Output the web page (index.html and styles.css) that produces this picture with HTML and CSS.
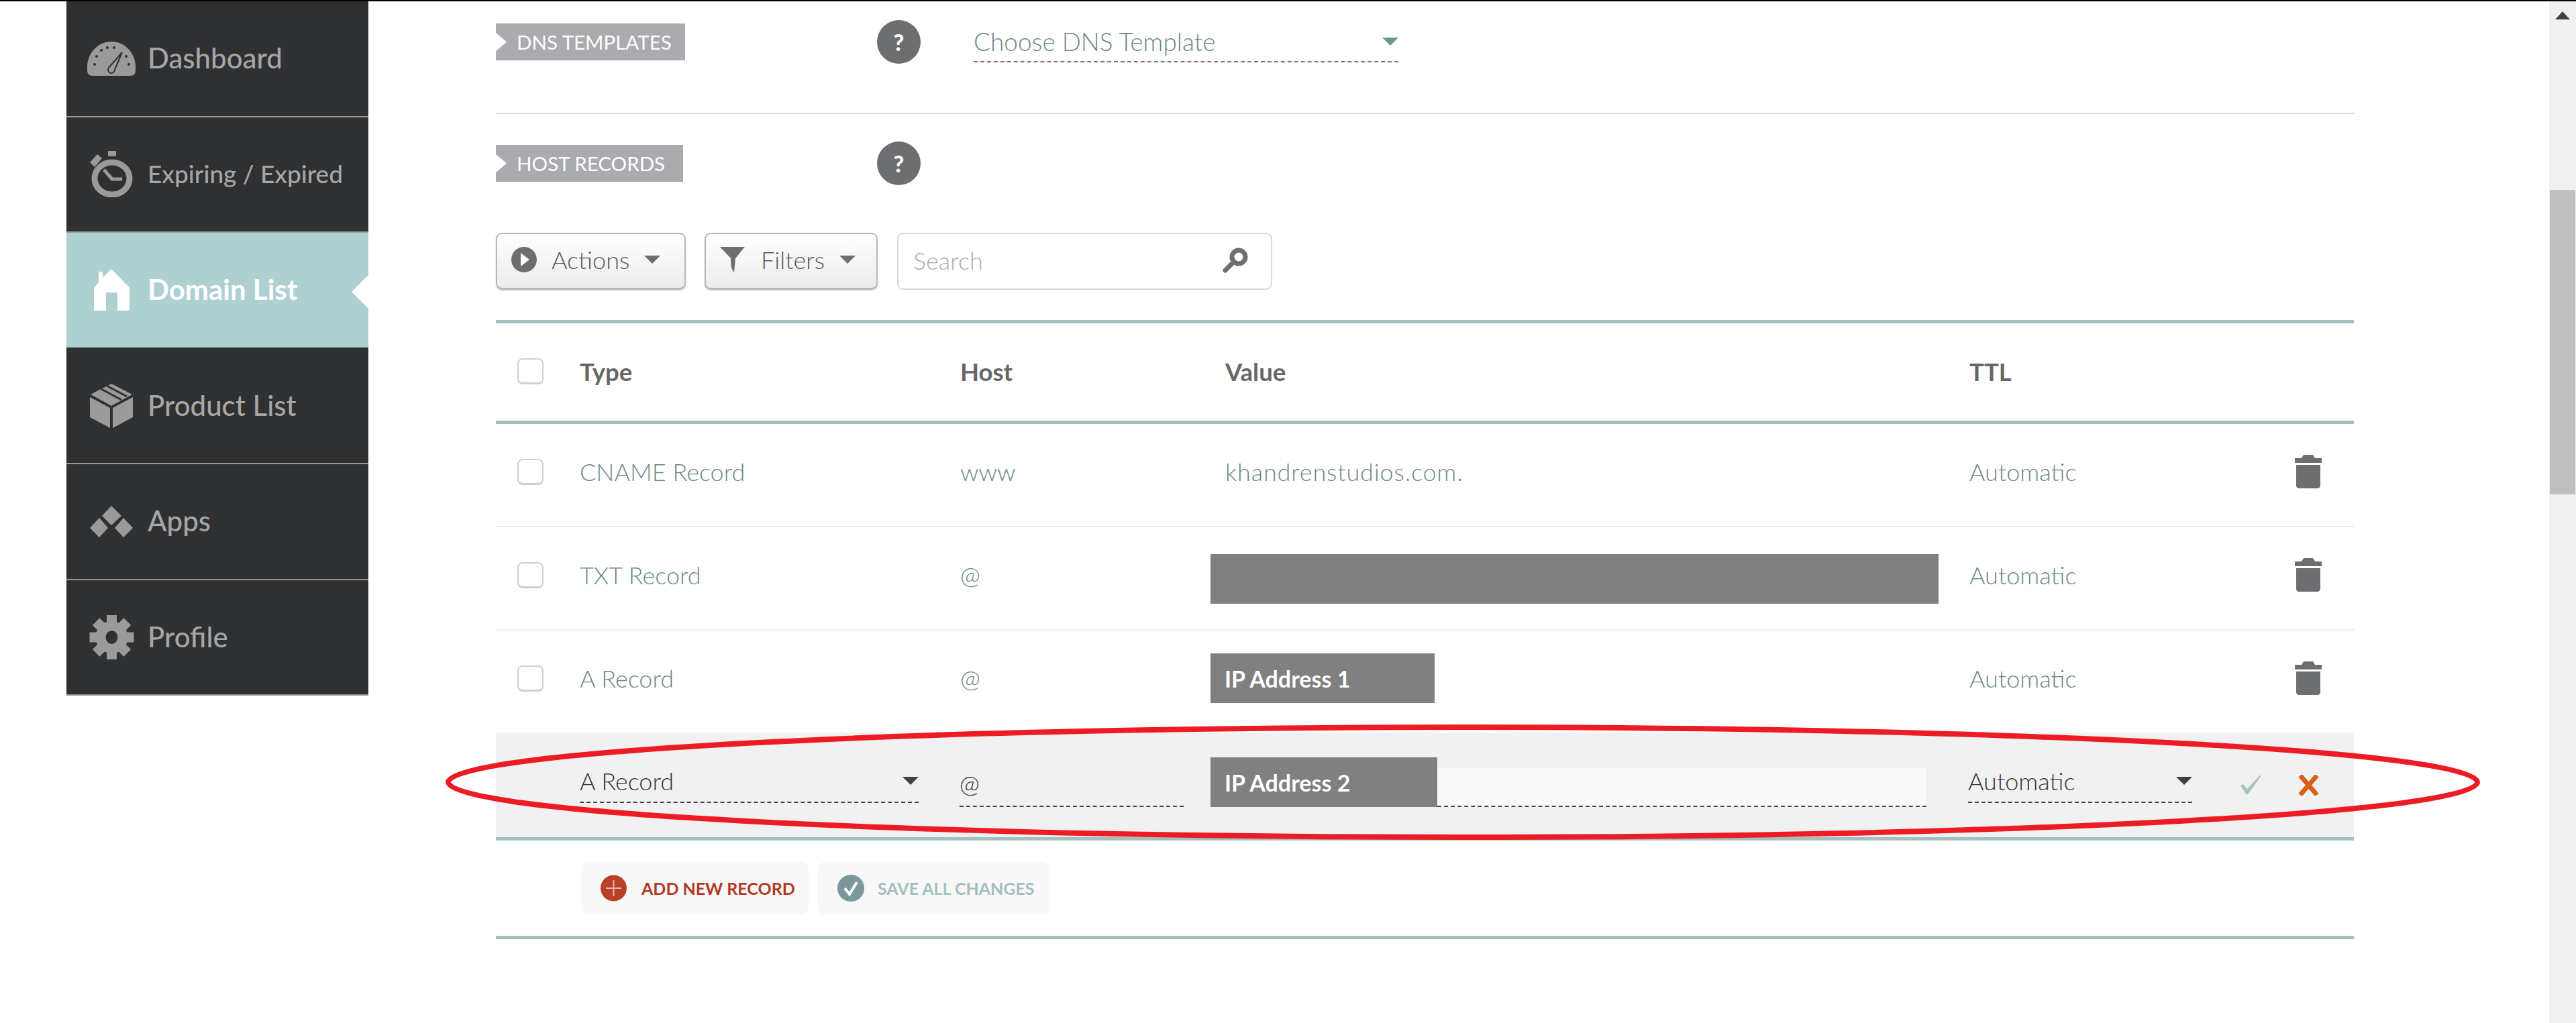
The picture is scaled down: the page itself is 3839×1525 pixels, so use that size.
FILE: index.html
```html
<!DOCTYPE html>
<html lang="en">

<head>
  <meta charset="UTF-8">
  <title>Host Records</title>
  <link rel="stylesheet" href="styles.css">
</head>

<body>
  <div class="page">
    <nav class="sidebar">
      <a class="nav-item">
        <span class="nav-icon">
          <svg width="72" height="51" viewBox="0 0 72 51">
            <path fill="#9a9a9a" d="M36 0C16 0 0 17 0 38v5c0 5 3 8 8 8h56c5 0 8-3 8-8v-5C72 17 56 0 36 0z"/>
            <g fill="#2f3032">
              <circle cx="11" cy="34" r="2"/><circle cx="14" cy="22" r="2"/><circle cx="21" cy="13" r="2"/>
              <circle cx="30" cy="9" r="2"/><circle cx="40" cy="9" r="2"/><circle cx="58" cy="22" r="2"/><circle cx="62" cy="34" r="2"/>
            </g>
            <path fill="#9a9a9a" stroke="#2f3032" stroke-width="2" d="M52 16L41 42a5 5 0 1 1-9-3z"/>
          </svg>
        </span>
        <span class="nav-label">Dashboard</span>
      </a>
      <a class="nav-item nav-small">
        <span class="nav-icon">
          <svg width="65" height="69" viewBox="0 0 65 69">
            <path fill="#9a9a9a" d="M27 0h12v8H27zM0 17L11 5l7 6L7 24z"/>
            <ellipse cx="33" cy="41" rx="26" ry="24" fill="none" stroke="#9a9a9a" stroke-width="9"/>
            <path fill="none" stroke="#9a9a9a" stroke-width="5" d="M21 28l12 14h15"/>
          </svg>
        </span>
        <span class="nav-label">Expiring / Expired</span>
      </a>
      <a class="nav-item active">
        <span class="nav-icon">
          <svg width="53" height="62" viewBox="0 0 53 62">
            <path fill="#fff" d="M26 0l27 28v34H35V35H18v27H0V28l7-8V4h6v9z"/>
          </svg>
        </span>
        <span class="nav-label">Domain List</span>
      </a>
      <a class="nav-item">
        <span class="nav-icon">
          <svg width="64" height="66" viewBox="0 0 64 66">
            <path fill="#9a9a9a" d="M32 0l31 16-31 17L1 16zM0 20l30 16v30L0 50zM34 36l30-16v30L34 66z"/>
            <path stroke="#2f3032" stroke-width="3" d="M17 8l30 16M25 3l30 16" fill="none"/>
          </svg>
        </span>
        <span class="nav-label">Product List</span>
      </a>
      <a class="nav-item">
        <span class="nav-icon">
          <svg width="64" height="47" viewBox="0 0 64 47">
            <path fill="#9a9a9a" d="M32 0l15 15-15 14-14-14zM14 18l13 15-13 14L0 33zM50 18l14 15-14 14-13-14z"/>
          </svg>
        </span>
        <span class="nav-label">Apps</span>
      </a>
      <a class="nav-item">
        <span class="nav-icon">
          <svg width="67" height="66" viewBox="0 0 67 66">
            <g fill="#9a9a9a">
              <rect x="26" y="0" width="15" height="66"/>
              <rect x="26" y="0" width="15" height="66" transform="rotate(45 33.5 33)"/>
              <rect x="26" y="0" width="15" height="66" transform="rotate(90 33.5 33)"/>
              <rect x="26" y="0" width="15" height="66" transform="rotate(135 33.5 33)"/>
              <circle cx="33.5" cy="33" r="24"/>
            </g>
            <ellipse cx="33.5" cy="33" rx="9" ry="10" fill="#2f3032"/>
          </svg>
        </span>
        <span class="nav-label">Profile</span>
      </a>
    </nav>

    <main class="content">
      <div class="field-row dns-row">
        <span class="tag">DNS TEMPLATES</span>
        <span class="help">?</span>
        <div class="dns-select">
          <span>Choose DNS Template</span>
          <i class="caret caret-teal"></i>
        </div>
      </div>

      <div class="field-row host-row">
        <span class="tag tag-host">HOST RECORDS</span>
        <span class="help">?</span>
      </div>

      <div class="toolbar">
        <button class="btn btn-actions">
          <svg width="38" height="38" viewBox="0 0 38 38">
            <circle cx="19" cy="19" r="19" fill="#6d6e70"/>
            <path fill="#fff" d="M14 9l13 10-13 10z"/>
          </svg>
          <span>Actions</span>
          <i class="caret"></i>
        </button>
        <button class="btn btn-filters">
          <svg width="37" height="38" viewBox="0 0 37 38">
            <path fill="#6d6e70" d="M0 0h37L23 17l-2 21-4-6-1-15z"/>
          </svg>
          <span>Filters</span>
          <i class="caret"></i>
        </button>
        <div class="search">
          <span>Search</span>
          <svg width="38" height="38" viewBox="0 0 38 38">
            <circle cx="24" cy="14" r="10" fill="none" stroke="#6d6e70" stroke-width="7"/>
            <path stroke="#6d6e70" stroke-width="7" stroke-linecap="round" d="M15 23L4 34"/>
          </svg>
        </div>
      </div>

      <div class="records">
        <div class="row row-head">
          <span class="check"></span>
          <span>Type</span>
          <span>Host</span>
          <span>Value</span>
          <span>TTL</span>
        </div>

        <div class="row">
          <span class="check"></span>
          <span>CNAME Record</span>
          <span>www</span>
          <span class="value-text">khandrenstudios.com.</span>
          <span>Automatic</span>
          <span class="row-actions">
            <svg class="trash" width="40" height="50" viewBox="0 0 40 50">
              <path fill="#6d6e70" d="M13 0h14l3 5h10v7H0V5h10zM2 15h36v31c0 2-2 4-4 4H6c-2 0-4-2-4-4z"/>
            </svg>
          </span>
        </div>

        <div class="row">
          <span class="check"></span>
          <span>TXT Record</span>
          <span>@</span>
          <span class="redacted"></span>
          <span>Automatic</span>
          <span class="row-actions">
            <svg class="trash" width="40" height="50" viewBox="0 0 40 50">
              <path fill="#6d6e70" d="M13 0h14l3 5h10v7H0V5h10zM2 15h36v31c0 2-2 4-4 4H6c-2 0-4-2-4-4z"/>
            </svg>
          </span>
        </div>

        <div class="row row-third">
          <span class="check"></span>
          <span>A Record</span>
          <span>@</span>
          <span class="ip-block ip-one">IP Address 1</span>
          <span>Automatic</span>
          <span class="row-actions">
            <svg class="trash" width="40" height="50" viewBox="0 0 40 50">
              <path fill="#6d6e70" d="M13 0h14l3 5h10v7H0V5h10zM2 15h36v31c0 2-2 4-4 4H6c-2 0-4-2-4-4z"/>
            </svg>
          </span>
        </div>

        <div class="row row-edit">
          <span></span>
          <div class="select select-type">
            <span>A Record</span>
            <i class="caret caret-dark"></i>
          </div>
          <div class="host-input">@</div>
          <div class="value-input">
            <span class="ip-block ip-two">IP Address 2</span>
            <span class="value-rest"></span>
          </div>
          <div class="select select-ttl">
            <span>Automatic</span>
            <i class="caret caret-dark"></i>
          </div>
          <span class="row-actions edit-actions">
            <svg width="31" height="28" viewBox="0 0 31 28">
              <path fill="#a3c4c2" d="M0 15l4-2 6 7L29 0h2L11 28h-3z"/>
            </svg>
            <svg width="31" height="31" viewBox="0 0 31 31">
              <path fill="none" stroke="#d9601a" stroke-width="7" d="M3 1l25 29M28 1L3 30"/>
            </svg>
          </span>
        </div>

        <div class="footer-row">
          <button class="pill pill-add">
            <svg width="39" height="40" viewBox="0 0 39 40">
              <circle cx="19.5" cy="20" r="19.5" fill="#b9412a"/>
              <path stroke="#e9b9ad" stroke-width="2" d="M19.5 8v24M8 20h23"/>
            </svg>
            <span>ADD NEW RECORD</span>
          </button>
          <button class="pill pill-save">
            <svg width="40" height="40" viewBox="0 0 40 40">
              <circle cx="20" cy="20" r="20" fill="#7c979c"/>
              <path fill="none" stroke="#fff" stroke-width="4" d="M11 20l7 9 11-18"/>
            </svg>
            <span>SAVE ALL CHANGES</span>
          </button>
        </div>
      </div>
    </main>

    <aside class="scrollbar">
      <i class="scroll-up"></i>
      <div class="scroll-thumb"></div>
    </aside>

    <svg class="circled" width="3050" height="190" viewBox="0 0 3050 190">
      <ellipse cx="1525" cy="90" rx="1512" ry="82" fill="none" stroke="#ed1c24" stroke-width="8"/>
    </svg>
  </div>
</body>

</html>
```

FILE: styles.css
```css
* {
  box-sizing: border-box;
}

body {
  margin: 0;
  font-family: Lato, "Open Sans", sans-serif;
  color: #333;
  background: #fff;
}

.page {
  position: relative;
  display: flex;
  height: 1525px;
  overflow: hidden;
  border-top: 2px solid #000;
}

/* sidebar */
.sidebar {
  width: 450px;
  height: 1035px;
  margin-left: 99px;
  flex-shrink: 0;
}

.nav-item {
  position: relative;
  display: flex;
  align-items: center;
  height: 172.5px;
  padding-left: 31px;
  background: #2f3032;
  border-bottom: 2px solid #999;
  color: #a6a6a6;
  font-size: 42px;
  font-weight: 500;
}

.nav-small {
  font-size: 37px;
}

.nav-icon {
  display: flex;
  justify-content: center;
  width: 72px;
  margin-right: 18px;
}

.nav-label {
  margin-top: -2px;
}

.active {
  background: #aed0d0;
  border-bottom-color: #2f3032;
  color: #fff;
  font-weight: 700;
}

.active::after {
  content: "";
  position: absolute;
  right: 0;
  top: 63px;
  width: 25px;
  height: 50px;
  background: #fff;
  clip-path: polygon(100% 0, 0 50%, 100% 100%);
}

/* main column */
.content {
  width: 2769px;
  margin-left: 190px;
  flex-shrink: 0;
}

.field-row {
  display: flex;
  align-items: center;
}

.dns-row {
  height: 168px;
  padding: 29px 0 74px;
  border-bottom: 2px solid #d5d8d8;
}

.host-row {
  height: 65px;
  margin-top: 41px;
}

.tag {
  display: flex;
  align-items: center;
  width: 282px;
  height: 55px;
  padding-left: 31px;
  background: #a9abae;
  color: #fff;
  font-size: 29.5px;
  font-weight: 400;
  clip-path: polygon(0 0, 100% 0, 100% 100%, 0 100%, 0 75%, 16px 50%, 0 25%);
}

.tag-host {
  width: 279px;
}

.help {
  display: flex;
  align-items: center;
  justify-content: center;
  width: 65px;
  height: 65px;
  margin-left: 286px;
  border-radius: 50%;
  background: #6d6e70;
  color: #fff;
  font-size: 34px;
  font-weight: 900;
}

.tag-host + .help {
  margin-left: 289px;
}

.dns-select {
  display: flex;
  align-items: center;
  justify-content: space-between;
  width: 633px;
  height: 61px;
  margin-left: 79px;
  border-bottom: 2px dashed #777;
  color: #6b8886;
  font-size: 37px;
  font-weight: 300;
}

.caret {
  width: 0;
  height: 0;
  border-style: solid;
  border-width: 12px 12px 0;
  border-color: #6d6e70 transparent transparent;
}

.caret-teal {
  border-top-color: #6f9591;
}

.caret-dark {
  border-top-color: #404040;
}

/* toolbar */
.toolbar {
  display: flex;
  gap: 28px;
  height: 85px;
  margin-top: 71px;
}

.btn {
  display: flex;
  align-items: center;
  height: 85px;
  padding: 0 0 4px 21px;
  border: 2px solid #b8b8b8;
  border-bottom-width: 3px;
  border-radius: 9px;
  background: linear-gradient(#fff, #ececec);
  box-shadow: 0 1px 2px #ccc;
  color: #555;
  font-family: inherit;
  font-size: 36px;
  font-weight: 300;
}

.btn-actions {
  width: 283px;
}

.btn-actions span {
  margin: 0 22px;
}

.btn-filters {
  width: 258px;
}

.btn-filters span {
  margin: 0 22px 0 24px;
}

.search {
  display: flex;
  align-items: center;
  justify-content: space-between;
  width: 559px;
  height: 85px;
  margin-left: 1px;
  padding: 0 34px 4px 22px;
  border: 2px solid #d8d8d8;
  border-radius: 9px;
  color: #aaa;
  font-size: 36px;
  font-weight: 300;
}

/* records table */
.records {
  margin-top: 45px;
  border-top: 5px solid #a3bfbf;
}

.row {
  display: grid;
  grid-template-columns: 125px 567px 395px 1109px 404px 169px;
  align-items: center;
  height: 154px;
  padding-bottom: 10px;
  border-bottom: 2px solid #ececec;
  color: #6b8886;
  font-size: 36px;
  font-weight: 300;
}

.row-head {
  height: 150px;
  padding-bottom: 2px;
  border-bottom: 5px solid #a3bfbf;
  color: #666;
  font-weight: 700;
  font-size: 36.5px;
}

.row-third {
  height: 152px;
  border-bottom: 0;
}

.value-text {
  letter-spacing: 0.85px;
}

.check {
  width: 39px;
  height: 39px;
  margin-left: 32px;
  border: 2px solid #cfcfcf;
  border-bottom-width: 3px;
  border-radius: 8px;
}

.row-actions {
  display: flex;
  align-items: center;
}

.trash {
  margin-left: 81px;
}

.redacted {
  width: 1085px;
  height: 74px;
  margin: 12px 0 0 -22px;
  background: #808080;
}

.ip-block {
  display: flex;
  align-items: center;
  height: 74px;
  padding-left: 21px;
  background: #808080;
  color: #fff;
  font-size: 34px;
  font-weight: 700;
}

.ip-one {
  width: 334px;
  margin-left: -22px;
}

.ip-two {
  width: 338px;
  flex-shrink: 0;
}

.row-edit {
  height: 161px;
  padding-bottom: 0;
  border-bottom: 5px solid #a3bfbf;
  background: #f1f1f1;
  color: #333;
}

.select {
  display: flex;
  align-items: center;
  justify-content: space-between;
  height: 60px;
  margin-bottom: 6px;
  padding-bottom: 4px;
  border-bottom: 2px dashed #444;
}

.select-type {
  width: 505px;
}

.select-ttl {
  width: 334px;
  margin-left: -2px;
}

.host-input {
  width: 334px;
  height: 60px;
  margin: 6px 0 0 -1px;
  padding-top: 3px;
  border-bottom: 2px dashed #444;
  line-height: 44px;
}

.value-input {
  display: flex;
  align-items: flex-end;
  width: 1067px;
  margin: 0 0 8px -22px;
}

.value-rest {
  flex: 1;
  height: 58px;
  background: #fafafa;
  border-bottom: 2px dashed #444;
}

.edit-actions {
  gap: 55px;
}

.footer-row {
  display: flex;
  gap: 13px;
  height: 147px;
  padding: 32px 0 32px 127px;
  border-bottom: 5px solid #a3bfbf;
}

.pill {
  display: flex;
  align-items: center;
  height: 78px;
  padding: 0;
  border: 0;
  border-radius: 12px;
  background: #f8f8f8;
  font-family: inherit;
  font-size: 25px;
  font-weight: 700;
}

.pill-add {
  width: 339px;
  padding-left: 29px;
  color: #b03a22;
}

.pill-add span {
  margin-left: 22px;
}

.pill-save {
  width: 347px;
  padding-left: 30px;
  color: #a3bfbf;
}

.pill-save span {
  margin-left: 20px;
}

/* browser scrollbar */
.scrollbar {
  width: 40px;
  margin-left: auto;
  padding: 15px 1px 0;
  background: #f0f0f0;
}

.scroll-up {
  display: block;
  width: 0;
  height: 0;
  margin: 0 auto;
  border-style: solid;
  border-width: 0 11px 12px;
  border-color: transparent transparent #404040;
}

.scroll-thumb {
  height: 454px;
  margin-top: 254px;
  background: #bfbfbf;
}

/* hand drawn highlight */
.circled {
  position: absolute;
  left: 655px;
  top: 1074px;
  pointer-events: none;
}
```
